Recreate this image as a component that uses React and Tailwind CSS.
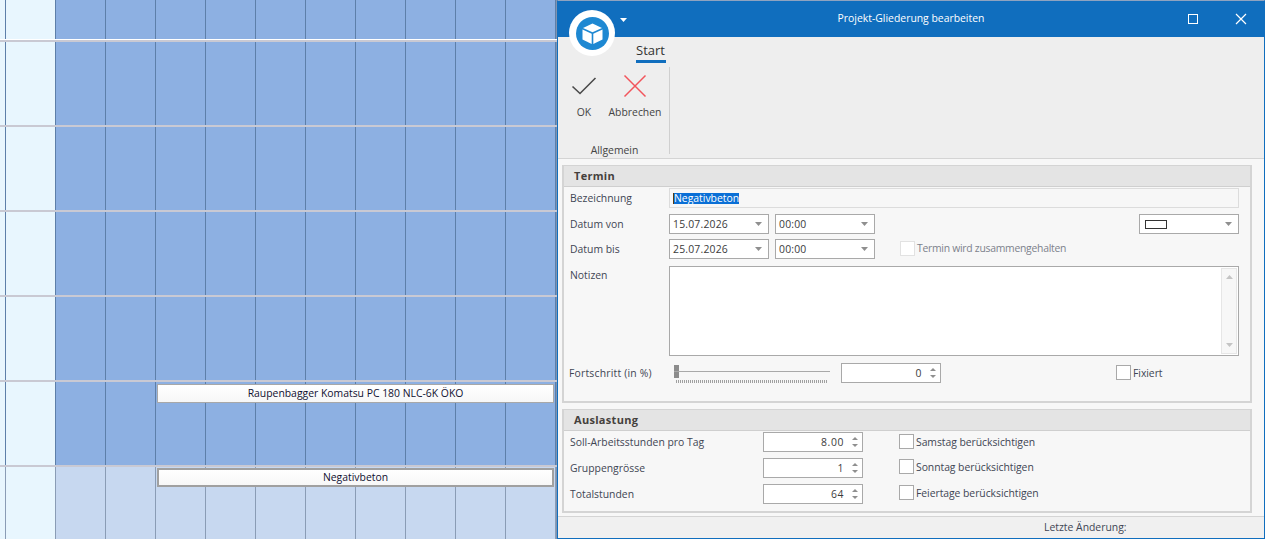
import React from 'react'

const rows = [
  { height: 'h-[42px]' },
  { height: 'h-[85px]' },
  { height: 'h-[85px]' },
  { height: 'h-[85px]' },
  { height: 'h-[85px]' },
  { height: 'h-[85px]', bar: 'Raupenbagger Komatsu PC 180 NLC-6K ÖKO' },
  { height: 'h-[72px]', bar: 'Negativbeton', light: true, selected: true },
]

const columns = Array.from({ length: 10 }, (_, i) => i)
const field = 'bg-white border border-[#a9a9a9] h-5 box-border flex items-center'
const label = 'pt-[2px] pl-[6px]'

const Caret = () => (
  <svg width="7" height="4" viewBox="0 0 7 4" className="shrink-0"><path d="M0 0h7L3.5 4z" fill="#8f8f8f" /></svg>
)

const Combo = ({ value, width = 'w-[100px]' }) => (
  <div className={`${field} ${width} pl-[3px] pr-[6px] justify-between text-[#3b3b3b] tracking-[0.2px]`}>
    <span className="pt-[2px]">{value}</span>
    <Caret />
  </div>
)

const Spin = ({ value }) => (
  <div className={`${field} w-[100px] justify-end pr-[4px] text-[#3b3b3b]`}>
    <span className="mr-[8px] pt-[2px] tracking-[0.6px]">{value}</span>
    <div className="flex flex-col gap-[4px]">
      <svg width="6" height="3" viewBox="0 0 6 3"><path d="M0 3h6L3 0z" fill="#8f8f8f" /></svg>
      <svg width="6" height="3" viewBox="0 0 6 3"><path d="M0 0h6L3 3z" fill="#8f8f8f" /></svg>
    </div>
  </div>
)

const Check = ({ label, disabled }) => (
  <div className="flex items-center gap-[2px]">
    <div className={`w-[15px] h-[15px] bg-white border ${disabled ? 'border-[#e2e2e2]' : 'border-[#a9a9a9]'}`} />
    <span className={disabled ? 'text-[#7d828c] tracking-[-0.27px]' : 'pt-[2px] text-[#3f4654] tracking-[-0.05px]'}>{label}</span>
  </div>
)

const GroupHeader = ({ title }) => (
  <div className="h-[21px] bg-[#e4e4e4] border-b border-[#cfcfcf] pl-[10px] flex items-center font-bold text-[11px] text-[#44403c] tracking-[0.3px]">
    {title}
  </div>
)

const Gantt = () => (
  <div className="w-[557px] h-[539px] overflow-hidden flex flex-col">
    {rows.map((row, r) => (
      <div key={r} className={`relative ${row.height} shrink-0 flex ${r === 6 ? '' : 'border-b-2 border-[#c9c9d3]'} ${r === 0 ? 'pb-px' : ''}`}>
        <div className={`w-[6px] bg-[#e8f6fe] border-r ${row.light ? 'border-[#8a9cb5]' : 'border-[#5d7fa9]'}`} />
        <div className={`w-[50px] bg-[#e8f6fe] border-r ${row.light ? 'border-[#8a9cb5]' : 'border-[#5d7fa9]'}`} />
        {columns.map((c) => (
          <div key={c} className={`w-[50px] border-r ${row.light ? 'bg-[#c7d8f0] border-[#8a9cb5]' : 'bg-[#8db0e2] border-[#5d7fa9]'}`} />
        ))}
        <div className="w-px bg-[#7f93b0]" />
        {row.bar && (
          <div className={`absolute left-[157px] w-[397px] h-[19px] flex items-center justify-center bg-gradient-to-b from-white to-[#f7f7f7] text-[#101030] ${row.selected ? 'top-[1px] border-2 border-[#a0a0a0]' : 'top-[2px] border border-[#a8a8a8]'}`}>
            {row.bar}
          </div>
        )}
      </div>
    ))}
  </div>
)

const Ribbon = () => (
  <div className="relative h-[122px] bg-[#eeeeee] border-b border-[#d4d4d4] shrink-0 flex flex-col">
    <div className="absolute left-[11px] top-[-27px] w-[46px] h-[46px] rounded-full bg-white flex items-center justify-center">
      <svg width="33" height="33" viewBox="0 0 33 33">
        <circle cx="16.5" cy="16.5" r="16.5" fill="#1e88d2" />
        <path d="M16.5 6.5 7 11l9.5 4.3L26 11z" fill="#fff" />
        <path d="M6.5 12.5 15.7 16.7V27L6.5 22.5z" fill="#fff" />
        <path d="M26.5 12.5 17.3 16.7V27l9.2-4.5z" fill="#fff" />
      </svg>
    </div>
    <div className="ml-[78px] mt-[4px] w-[30px] h-[22px] border-b-[3px] border-[#106ebe] text-[13px] text-[#333] leading-[18px]">Start</div>
    <div className="flex mt-[4px] ml-[1px] h-[87px]">
      <div className="w-[111px] border-r border-[#cfcfcf] flex flex-col h-full">
        <div className="flex">
          <div className="w-[50px] flex flex-col items-center text-[#444]">
            <svg width="26" height="20" viewBox="0 0 26 20" className="mt-[9px]"><path d="M1.5 10.5 9 17.5 24.5 2" fill="none" stroke="#4a4a4a" strokeWidth="1.6" /></svg>
            <span className="mt-[9px]">OK</span>
          </div>
          <div className="w-[52px] flex flex-col items-center text-[#444]">
            <svg width="24" height="24" viewBox="0 0 24 24" className="mt-[7px]"><path d="M1.5 1.5l21 21M22.5 1.5l-21 21" fill="none" stroke="#f2545b" strokeWidth="1.5" /></svg>
            <span className="mt-[7px]">Abbrechen</span>
          </div>
        </div>
        <div className="mt-auto mb-[-5px] text-center text-[#444] pl-[1px]">Allgemein</div>
      </div>
    </div>
  </div>
)

const Termin = () => (
  <div className="h-[238px] border-2 border-t border-[#d4d4d4] bg-[#f7f7f7] box-border">
    <GroupHeader title="Termin" />
    <div className="flex items-center h-[20px] mt-px">
      <span className={`w-[105px] ${label}`}>Bezeichnung</span>
      <div className="w-[570px] h-5 border border-[#dcdcdc] pl-[3px] flex items-center">
        <span className="inline-block h-[11px] leading-[11px] bg-[#0a6fd6] text-white border-l border-[#5a3a10]">Negativbeton</span>
      </div>
    </div>
    <div className="flex items-center h-[20px] mt-[6px]">
      <span className={`w-[105px] ${label}`}>Datum von</span>
      <Combo value="15.07.2026" />
      <div className="ml-[6px]"><Combo value="00:00" /></div>
      <div className="ml-auto mr-[11px] bg-white border border-[#a9a9a9] w-[100px] h-5 flex items-center justify-between pl-[5px] pr-[6px]">
        <div className="w-[22px] h-[9px] border border-[#333]" />
        <Caret />
      </div>
    </div>
    <div className="flex items-center h-[20px] mt-[5px]">
      <span className={`w-[105px] ${label}`}>Datum bis</span>
      <Combo value="25.07.2026" />
      <div className="ml-[6px]"><Combo value="00:00" /></div>
      <div className="ml-[25px]"><Check label="Termin wird zusammengehalten" disabled /></div>
    </div>
    <div className="flex mt-[7px] h-[90px]">
      <span className={`w-[105px] ${label}`}>Notizen</span>
      <div className="w-[570px] h-full bg-white border border-[#a9a9a9] flex justify-end p-px">
        <div className="w-[16px] bg-[#f7f7f7] border border-[#e6e6e6] flex flex-col justify-between items-center py-[6px]">
          <svg width="7" height="4" viewBox="0 0 7 4"><path d="M0 4h7L3.5 0z" fill="#c4c4c4" /></svg>
          <svg width="7" height="4" viewBox="0 0 7 4"><path d="M0 0h7L3.5 4z" fill="#c4c4c4" /></svg>
        </div>
      </div>
    </div>
    <div className="flex items-center h-[20px] mt-[7px]">
      <span className="w-[110px] pl-[5px] pt-[2px] text-[#3f4654] tracking-[0.2px]">Fortschritt (in %)</span>
      <div className="relative w-[156px] h-[20px]">
        <div className="absolute left-0 top-[2px] w-[5px] h-[13px] bg-[#8c8c8c]" />
        <div className="absolute left-0 right-0 top-[8px] h-px bg-[#a9a9a9]" />
        <div className="absolute left-[2px] right-[2px] top-[17px] h-[3px] bg-[repeating-linear-gradient(90deg,#a0a0a0_0,#a0a0a0_1px,transparent_1px,transparent_2px)]" />
      </div>
      <div className="ml-[11px]"><Spin value="0" /></div>
      <div className="ml-[175px]"><Check label="Fixiert" /></div>
    </div>
  </div>
)

const Auslastung = () => (
  <div className="h-[104px] border-2 border-t border-[#d4d4d4] bg-[#f7f7f7] box-border">
    <GroupHeader title="Auslastung" />
    <div className="flex flex-col gap-[6px] pt-px">
      {[
        ['Soll-Arbeitsstunden pro Tag', '8.00', 'Samstag berücksichtigen', ''],
        ['Gruppengrösse', '1', 'Sonntag berücksichtigen', 'mb-[2px]'],
        ['Totalstunden', '64', 'Feiertage berücksichtigen', 'mb-[3px]'],
      ].map(([text, value, check, shift]) => (
        <div key={text} className="flex items-center h-[20px]">
          <span className={`w-[199px] ${label}`}>{text}</span>
          <Spin value={value} />
          <div className={`ml-[36px] ${shift}`}><Check label={check} /></div>
        </div>
      ))}
    </div>
  </div>
)

const Dialog = () => (
  <div className="absolute left-[557px] top-0 w-[708px] h-[539px] border-x border-b border-[#106ebe] border-t border-t-[#8fa3c0] flex flex-col bg-[#f7f7f7] text-[#3f4654]">
    <div className="relative h-[36px] shrink-0 bg-[#106ebe] flex items-center justify-center text-white">
      <svg width="7" height="4" viewBox="0 0 7 4" className="absolute left-[62px] top-[17px]"><path d="M0 0h7L3.5 4z" fill="#fff" /></svg>
      <span>Projekt-Gliederung bearbeiten</span>
      <div className="absolute right-[66px] top-[13px] w-[10px] h-[10px] border border-white" />
      <svg width="12" height="12" viewBox="0 0 12 12" className="absolute right-[17px] top-[12px]"><path d="M1 1l10 10M11 1 1 11" stroke="#fff" strokeWidth="1.2" /></svg>
    </div>
    <Ribbon />
    <div className="flex-1 flex flex-col pl-[4px] pr-[12px] pt-[6px] gap-[6px]">
      <Termin />
      <Auslastung />
    </div>
    <div className="h-[22px] shrink-0 bg-[#f0f0f0] border-t border-[#d4d4d4] flex items-center pl-[486px]">Letzte Änderung:</div>
  </div>
)

export default function App() {
  return (
    <div className="relative w-[1267px] h-[539px] overflow-hidden bg-white text-[10.4px] font-['Open_Sans','Liberation_Sans',sans-serif]">
      <Gantt />
      <Dialog />
    </div>
  )
}
